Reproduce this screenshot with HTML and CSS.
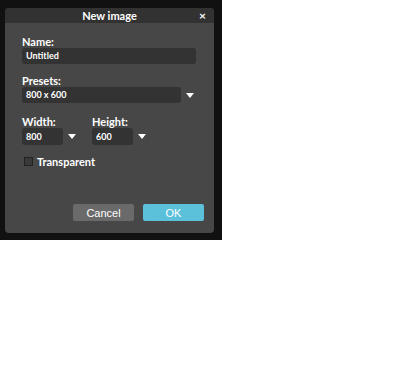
FILE: index.html
```html
<!DOCTYPE html>
<html lang="en">
<head>
    <meta charset="UTF-8">
    <title>New image</title>
    <link rel="stylesheet" href="styles.css">
</head>
<body>
    <div class="backdrop">
        <div class="dialog">
            <div class="titlebar">
                <span class="title">New image</span>
                <span class="close">&#215;</span>
            </div>
            <div class="content">
                <label class="label">Name:</label>
                <div class="field field-name">Untitled</div>

                <label class="label label-gap">Presets:</label>
                <div class="select-row">
                    <div class="field field-preset">800 x 600</div>
                    <span class="arrow"></span>
                </div>

                <div class="size-row">
                    <div class="size-col">
                        <label class="label">Width:</label>
                        <div class="select-row">
                            <div class="field field-size">800</div>
                            <span class="arrow"></span>
                        </div>
                    </div>
                    <div class="size-col">
                        <label class="label">Height:</label>
                        <div class="select-row">
                            <div class="field field-size">600</div>
                            <span class="arrow"></span>
                        </div>
                    </div>
                </div>

                <div class="check-row">
                    <span class="checkbox"></span>
                    <span class="check-label">Transparent</span>
                </div>

                <div class="buttons">
                    <button class="btn btn-cancel">Cancel</button>
                    <button class="btn btn-ok">OK</button>
                </div>
            </div>
        </div>
    </div>
</body>
</html>
```

FILE: styles.css
```css
/* Основа */
body {
    margin: 0;
    background: #fff;
    font-family: 'Lato', 'Liberation Sans', sans-serif;
}
.backdrop {
    width: 222px;
    height: 240px;
    background: #111;
    padding: 8px 0 0 5px;
    box-sizing: border-box;
}
.dialog {
    width: 209px;
    height: 225px;
    background: #474747;
    border-radius: 4px;
    overflow: hidden;
    display: flex;
    flex-direction: column;
}
.titlebar {
    height: 15px;
    flex-shrink: 0;
    background: #323232;
    display: flex;
    align-items: center;
    justify-content: center;
    position: relative;
    color: #fff;
}
.title {
    font-size: 11px;
    font-weight: bold;
}
.close {
    position: absolute;
    right: 8px;
    top: 0;
    font-size: 12px;
    font-weight: bold;
    line-height: 15px;
}
.content {
    flex: 1;
    padding: 13px 0 0 17px;
    display: flex;
    flex-direction: column;
}
.label {
    display: block;
    color: #fff;
    font-size: 11px;
    font-weight: bold;
    line-height: 11px;
    height: 11px;
    margin-bottom: 1px;
}
.label-gap {
    margin-top: 11px;
}
.field {
    height: 16px;
    background: #333;
    border-radius: 3px;
    color: #fff;
    font-size: 9px;
    font-weight: bold;
    line-height: 16px;
    padding-left: 4px;
    box-sizing: border-box;
}
.field-name {
    width: 174px;
}
.select-row {
    display: flex;
    align-items: center;
}
.field-preset {
    width: 159px;
}
.field-size {
    width: 41px;
}
.arrow {
    width: 0;
    height: 0;
    border-left: 4px solid transparent;
    border-right: 4px solid transparent;
    border-top: 5px solid #fff;
    margin-left: 5px;
}
.size-row {
    display: flex;
    gap: 16px;
    margin-top: 13px;
}
.size-col {
    display: flex;
    flex-direction: column;
}
.size-col .field {
    height: 17px;
    line-height: 17px;
}
.check-row {
    display: flex;
    align-items: center;
    height: 11px;
    margin-top: 11px;
    margin-left: 2px;
}
.checkbox {
    width: 7px;
    height: 7px;
    border: 1px solid #222;
    background: #3a3a3a;
}
.check-label {
    color: #fff;
    font-size: 11px;
    font-weight: bold;
    margin-left: 4px;
}
.buttons {
    display: flex;
    gap: 9px;
    margin-top: 37px;
    margin-left: 51px;
}
.btn {
    width: 61px;
    height: 17px;
    border: none;
    border-radius: 2px;
    color: #fff;
    font-family: 'Liberation Sans', Arial, sans-serif;
    font-size: 11px;
    padding: 0;
    cursor: pointer;
}
.btn-cancel {
    background: #6a6a6a;
}
.btn-ok {
    background: #5bc0d9;
}
```
